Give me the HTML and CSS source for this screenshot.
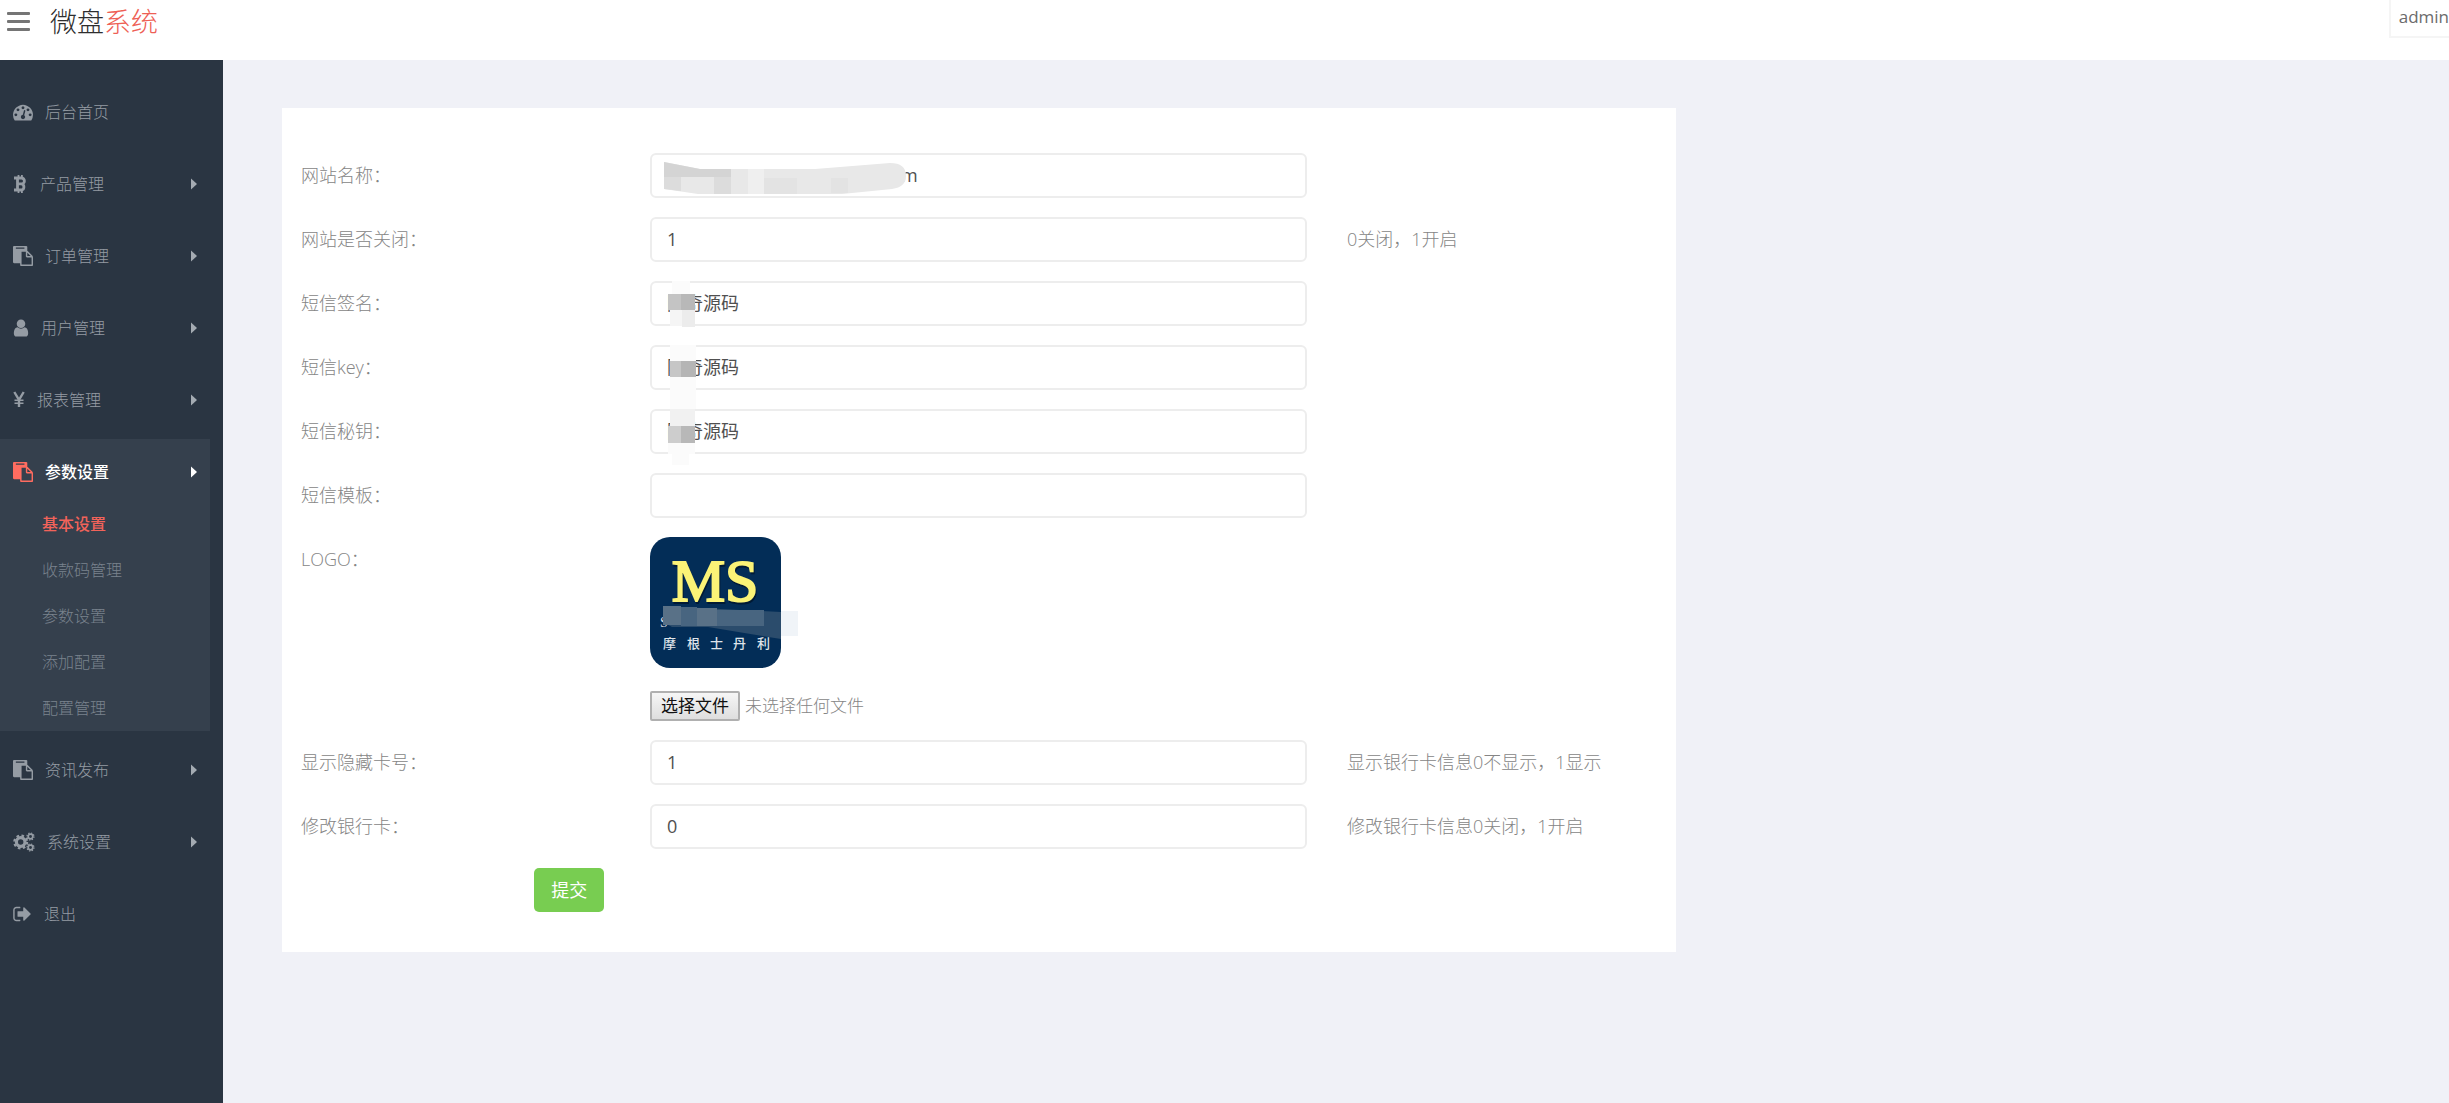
FILE: index.html
```html
<!DOCTYPE html>
<html lang="zh-CN">
<head>
<meta charset="utf-8">
<title>微盘系统</title>
<link rel="stylesheet" href="styles.css">
</head>
<body>
<svg class="defs" aria-hidden="true">
  <symbol id="i-dash" viewBox="0 0 1792 1792"><path d="M384 1152q0-53-37.500-90.500t-90.500-37.500-90.500 37.500-37.500 90.500 37.500 90.500 90.500 37.500 90.500-37.500 37.500-90.500zm192-448q0-53-37.500-90.500t-90.500-37.500-90.500 37.500-37.500 90.500 37.500 90.500 90.500 37.500 90.500-37.500 37.500-90.500zm428 481l101-382q6-26-7.500-48.500t-38.500-29.500-48 6.500-30 39.500l-101 382q-60 5-107 43.500t-63 98.500q-20 77 20 146t117 89 146-20 89-117q16-60-6-117t-72-91zm660-33q0-53-37.500-90.500t-90.500-37.500-90.500 37.500-37.500 90.500 37.500 90.500 90.500 37.500 90.500-37.500 37.500-90.500zm-640-640q0-53-37.500-90.500t-90.500-37.500-90.500 37.500-37.500 90.500 37.500 90.500 90.500 37.500 90.500-37.500 37.500-90.500zm448 192q0-53-37.500-90.500t-90.500-37.500-90.500 37.500-37.500 90.500 37.500 90.500 90.500 37.500 90.500-37.500 37.500-90.500zm320 448q0 261-141 483-19 29-54 29h-1402q-35 0-54-29-141-221-141-483 0-182 71-348t191-286 286-191 348-71 348 71 286 191 191 286 71 348z"/></symbol>
  <symbol id="i-btc" viewBox="0 0 15 20"><path fill="none" stroke="currentColor" stroke-width="2.800" d="M1 4h7.500a2.900 2.900 0 0 1 0 5.800H4.500M8.500 9.800a3.200 3.200 0 0 1 0 6.200H1M4.500 4V16"/><path fill="none" stroke="currentColor" stroke-width="1.800" d="M5.500 1v3M8.900 1v3M5.500 16v3M8.900 16v3"/></symbol>
  <symbol id="i-paste" viewBox="0 0 1792 1792"><path d="M768 1664h896v-640h-416q-40 0-68-28t-28-68v-416h-384v1152zm256-1440v-64q0-13-9.500-22.500t-22.500-9.500h-704q-13 0-22.500 9.500t-9.500 22.500v64q0 13 9.500 22.500t22.500 9.500h704q13 0 22.500-9.500t9.500-22.500zm256 672h299l-299-299v299zm512 128v672q0 40-28 68t-68 28h-960q-40 0-68-28t-28-68v-160h-544q-40 0-68-28t-28-68v-1344q0-40 28-68t68-28h1088q40 0 68 28t28 68v328q21 13 36 28l408 408q28 28 48 76t20 88z"/></symbol>
  <symbol id="i-user" viewBox="256 0 1280 1792"><path d="M1536 1399q0 109-62.500 187t-150.500 78h-854q-88 0-150.500-78t-62.500-187q0-85 8.500-160.500t31.500-152 58.500-131 94-89 134.500-34.500q131 128 313 128t313-128q76 0 134.500 34.500t94 89 58.500 131 31.500 152 8.500 160.500zm-256-887q0 159-112.500 271.500t-271.500 112.500-271.500-112.500-112.500-271.500 112.500-271.500 271.500-112.500 271.500 112.500 112.500 271.500z"/></symbol>
  <symbol id="i-yen" viewBox="0 0 12 20"><path fill="none" stroke="currentColor" stroke-width="2.400" d="M1.300 2L6 9.800 10.700 2M6 9v8"/><path fill="none" stroke="currentColor" stroke-width="1.600" d="M1.500 10.300h9M1.500 13.200h9"/></symbol>
  <symbol id="i-cogs" viewBox="0 0 22 20"><g fill="none" stroke="currentColor"><circle cx="7.700" cy="10" r="4.300" stroke-width="3.200"/><circle cx="7.700" cy="10" r="6.400" stroke-width="2.200" stroke-dasharray="2.600 2.427"/><circle cx="17.500" cy="4.500" r="2.300" stroke-width="1.700"/><circle cx="17.500" cy="4.500" r="3.500" stroke-width="1.200" stroke-dasharray="1.400 1.349"/><circle cx="17.500" cy="15.500" r="2.300" stroke-width="1.700"/><circle cx="17.500" cy="15.500" r="3.500" stroke-width="1.200" stroke-dasharray="1.400 1.349"/></g></symbol>
  <symbol id="i-out" viewBox="64 0 1664 1792"><path d="M704 1440q0 4 1 20t.5 26.500-3 23.500-10 19.500-20.500 6.500h-320q-119 0-203.500-84.500t-84.500-203.500v-704q0-119 84.500-203.500t203.500-84.500h320q13 0 22.500 9.500t9.500 22.500q0 4 1 20t.5 26.500-3 23.500-10 19.500-20.500 6.500h-320q-66 0-113 47t-47 113v704q0 66 47 113t113 47h312l11.500 1 11.500 3 8 5.500 7 9 2 13.500zm928-544q0 26-19 45l-544 544q-19 19-45 19t-45-19-19-45v-288h-448q-26 0-45-19t-19-45v-384q0-26 19-45t45-19h448v-288q0-26 19-45t45-19 45 19l544 544q19 19 19 45z"/></symbol>
  <symbol id="i-caret" viewBox="0 0 6 12"><path d="M0 .5l6 5.500-6 5.500z"/></symbol>
</svg>

<header class="topbar">
  <button class="toggle" type="button" aria-label="菜单"><span></span><span></span><span></span></button>
  <a class="brand" href="#">微盘<em>系统</em></a>
  <a class="account" href="#">admin</a>
</header>

<div class="layout">
  <nav class="sidebar">
    <ul class="menu">
      <li><a href="#"><svg class="icon w20"><use href="#i-dash"/></svg>后台首页</a></li>
      <li><a href="#"><svg class="icon w15"><use href="#i-btc"/></svg>产品管理<svg class="caret"><use href="#i-caret"/></svg></a></li>
      <li><a href="#"><svg class="icon w20"><use href="#i-paste"/></svg>订单管理<svg class="caret"><use href="#i-caret"/></svg></a></li>
      <li><a href="#"><svg class="icon w16"><use href="#i-user"/></svg>用户管理<svg class="caret"><use href="#i-caret"/></svg></a></li>
      <li><a href="#"><svg class="icon w12"><use href="#i-yen"/></svg>报表管理<svg class="caret"><use href="#i-caret"/></svg></a></li>
      <li class="open"><a href="#"><svg class="icon w20"><use href="#i-paste"/></svg>参数设置<svg class="caret"><use href="#i-caret"/></svg></a>
        <ul class="submenu">
          <li><a class="current" href="#">基本设置</a></li>
          <li><a href="#">收款码管理</a></li>
          <li><a href="#">参数设置</a></li>
          <li><a href="#">添加配置</a></li>
          <li><a href="#">配置管理</a></li>
        </ul>
      </li>
      <li><a href="#"><svg class="icon w20"><use href="#i-paste"/></svg>资讯发布<svg class="caret"><use href="#i-caret"/></svg></a></li>
      <li><a href="#"><svg class="icon w22"><use href="#i-cogs"/></svg>系统设置<svg class="caret"><use href="#i-caret"/></svg></a></li>
      <li><a href="#"><svg class="icon w19"><use href="#i-out"/></svg>退出</a></li>
    </ul>
  </nav>

  <main class="content">
    <form class="card">
      <div class="row">
        <label for="site">网站名称：</label>
        <div class="field">
          <input class="text masked" id="site" type="text" value="m">
          <svg class="mask" width="258" height="45" viewBox="0 0 258 45" aria-hidden="true">
            <path fill="#e8e8e8" d="M14 9l36 7h115l75-6q16 0 16 13 0 11-14 13l-50 5H48l-34-5z"/>
            <path fill="#d4d4d4" d="M14 9l36 7h31v8H14z"/>
            <path fill="#dcdcdc" d="M14 24h17v14l-17-2zM64 24h17v17H64z"/>
            <path fill="#efefef" d="M98 16h16v25H98z"/>
            <path fill="#e3e3e3" d="M114 25h33v16h-33zM181 25h17v15h-17z"/>
          </svg>
        </div>
      </div>
      <div class="row">
        <label for="closed">网站是否关闭：</label>
        <div class="field"><input class="text" id="closed" type="text" value="1"></div>
        <p class="help">0关闭，1开启</p>
      </div>
      <div class="row">
        <label for="sign">短信签名：</label>
        <div class="field">
          <input class="text" id="sign" type="text" value="阿奇源码">
          <svg class="mask" width="50" height="48" viewBox="0 0 50 48" aria-hidden="true"><path fill="#fbfbfb" d="M22 0h18v13H22z"/><path fill="#c4c4c4" d="M18 13h13v16H18z"/><path fill="#b8b8b8" d="M31 13h14v16H31z"/><path fill="#f5f5f5" d="M20 29h12v16H20z"/><path fill="#ececec" d="M32 29h13v17H32z"/></svg>
        </div>
      </div>
      <div class="row">
        <label for="key">短信key：</label>
        <div class="field">
          <input class="text" id="key" type="text" value="阿奇源码">
          <svg class="mask" width="50" height="64" viewBox="0 0 50 64" aria-hidden="true"><path fill="#fbfbfb" d="M20 0h26v16H20zM20 32h26v32H20z"/><path fill="#c6c6c6" d="M20 16h11v16H20z"/><path fill="#b5b5b5" d="M31 16h15v16H31z"/></svg>
        </div>
      </div>
      <div class="row">
        <label for="secret">短信秘钥：</label>
        <div class="field">
          <input class="text" id="secret" type="text" value="阿奇源码">
          <svg class="mask" width="50" height="56" viewBox="0 0 50 56" aria-hidden="true"><path fill="#f1f1f1" d="M20 0h25v17H20z"/><path fill="#cdcdcd" d="M18 17h13v17H18z"/><path fill="#b8b8b8" d="M31 17h14v17H31z"/><path fill="#fbfbfb" d="M18 34h27v11H39v11H22V45h-4z"/></svg>
        </div>
      </div>
      <div class="row">
        <label for="tpl">短信模板：</label>
        <div class="field"><input class="text" id="tpl" type="text" value=""></div>
      </div>
      <div class="row">
        <label for="logo">LOGO：</label>
        <div class="field upload">
          <svg class="logo" width="148" height="131" viewBox="0 0 148 131" role="img" aria-label="MS 摩根士丹利">
            <rect width="131" height="131" rx="20" fill="#032d57"/>
            <text class="ms-shadow" x="66" y="66" text-anchor="middle">MS</text>
            <text class="ms" x="65" y="64" text-anchor="middle">MS</text>
            <text class="latin" x="10" y="90">S</text>
            <path fill="#2b4c6c" d="M13 69l118 6v27L58 90H22l-9-5z"/>
            <path fill="#597187" d="M13 69h18v19H13zM47 71h20v18H47z"/>
            <path fill="#486580" d="M31 70h16v19H31zM67 73h47v16H67z"/>
            <path fill="#f0f4f8" d="M131 74h17v25h-17z"/>
            <g class="cn"><text x="13" y="111">摩</text><text x="37" y="111">根</text><text x="60" y="111">士</text><text x="83" y="111">丹</text><text x="107" y="111">利</text></g>
          </svg>
          <label class="file"><input id="logo" type="file"><span class="file-button">选择文件</span><span>未选择任何文件</span></label>
        </div>
      </div>
      <div class="row">
        <label for="card">显示隐藏卡号：</label>
        <div class="field"><input class="text" id="card" type="text" value="1"></div>
        <p class="help">显示银行卡信息0不显示，1显示</p>
      </div>
      <div class="row">
        <label for="bank">修改银行卡：</label>
        <div class="field"><input class="text" id="bank" type="text" value="0"></div>
        <p class="help">修改银行卡信息0关闭，1开启</p>
      </div>
      <div class="actions"><button class="submit" type="button">提交</button></div>
    </form>
  </main>
</div>
</body>
</html>
```
FILE: styles.css
```css
* { box-sizing: border-box; }

body {
  margin: 0;
  min-height: 100vh;
  display: flex;
  flex-direction: column;
  background: #f0f1f7;
  color: #858585;
  font: 300 18px/24px "Open Sans", "Noto Sans CJK SC", sans-serif;
}

a { color: inherit; text-decoration: none; }
ul { list-style: none; margin: 0; padding: 0; }
.defs { position: absolute; width: 0; height: 0; }

/* Header */
.topbar {
  display: flex;
  align-items: flex-start;
  height: 60px;
  background: #fff;
}
.toggle {
  display: flex;
  flex-direction: column;
  gap: 5px;
  margin: 12px 20px 0 7px;
  padding: 0;
  border: 0;
  background: none;
}
.toggle span { width: 23px; height: 3px; border-radius: 1px; background: #757575; }
.brand { font-size: 27px; line-height: 44px; color: #2e2e2e; }
.brand em { font-style: normal; color: #ee5f56; }
.account {
  margin-left: auto;
  height: 38px;
  padding-left: 8px;
  border: solid #f5f5f5;
  border-width: 0 0 2px 2px;
  font-size: 17px;
  font-weight: 400;
  line-height: 34px;
  color: #6b6b6b;
}

/* Sidebar */
.layout { display: flex; flex: 1; }
.sidebar {
  flex: 0 0 223px;
  padding-top: 16px;
  background: #2a3542;
  color: #959ca4;
  font-size: 16px;
}
.menu { display: flex; flex-direction: column; padding-right: 13px; }
.menu > li { margin: 3px 0; }
.menu > li > a {
  display: flex;
  align-items: center;
  height: 66px;
  padding: 0 13px;
}
.icon { height: 20px; margin-right: 12px; fill: currentColor; }
.w12 { width: 12px; }
.w15 { width: 15px; }
.w16 { width: 16px; }
.w19 { width: 19px; }
.w20 { width: 20px; }
.w22 { width: 22px; }
.caret { width: 6px; height: 12px; margin-left: auto; fill: #a4abb2; }
.menu > .open { background: #35404d; }
.open > a { color: #fff; font-weight: 500; }
.open .icon { color: #ff6c60; }
.open .caret { fill: #fff; }
.submenu { margin-top: -4px; color: #7a838e; }
.submenu a { display: block; padding-left: 42px; line-height: 46px; }
.submenu .current { color: #f2635a; font-weight: 500; }

/* Form card */
.content { flex: 1; padding: 48px 76px 48px 59px; }
.card {
  display: flex;
  flex-direction: column;
  gap: 19px;
  width: 66.667%;
  padding: 45px 19px 40px;
  background: #fff;
}
.row {
  display: grid;
  grid-template-columns: 349fr 657fr 350fr;
  align-items: start;
  line-height: 45px;
}
.field { position: relative; }
.text {
  display: block;
  width: 100%;
  height: 45px;
  padding: 0 15px;
  border: 2px solid #ededed;
  border-radius: 6px;
  background: #fff;
  color: #505050;
  font: inherit;
  font-weight: 400;
}
.masked { padding-left: 249px; }
.mask { position: absolute; top: 0; left: 0; pointer-events: none; }
.help { margin: 0; padding-left: 40px; }

.upload { display: flex; flex-direction: column; align-items: flex-start; gap: 23px; }
.logo { display: block; }
.ms, .ms-shadow { font: 400 60px "Liberation Serif", serif; stroke-width: 2px; }
.ms { fill: #fbf377; stroke: #fbf377; }
.ms-shadow { fill: #011a35; stroke: #011a35; }
.latin { font: 14px "Liberation Serif", serif; fill: #d8dfe6; }
.cn { font: 500 13px "Noto Sans CJK SC", sans-serif; fill: #dfe4ea; }

.file {
  display: flex;
  align-items: center;
  gap: 5px;
  font-size: 17px;
  line-height: 26px;
}
.file input { position: absolute; width: 1px; height: 1px; opacity: 0; }
.file-button {
  padding: 0 9px;
  border: 2px solid #b0b0b0;
  border-radius: 2px;
  background: linear-gradient(#f6f6f6, #dedede);
  color: #111;
  font-weight: 400;
}

.actions { padding-left: 17.2%; }
.submit {
  display: block;
  height: 44px;
  padding: 0 17px;
  border: 0;
  border-radius: 5px;
  background: #78cd51;
  color: #fff;
  font: inherit;
  font-weight: 400;
}
```
